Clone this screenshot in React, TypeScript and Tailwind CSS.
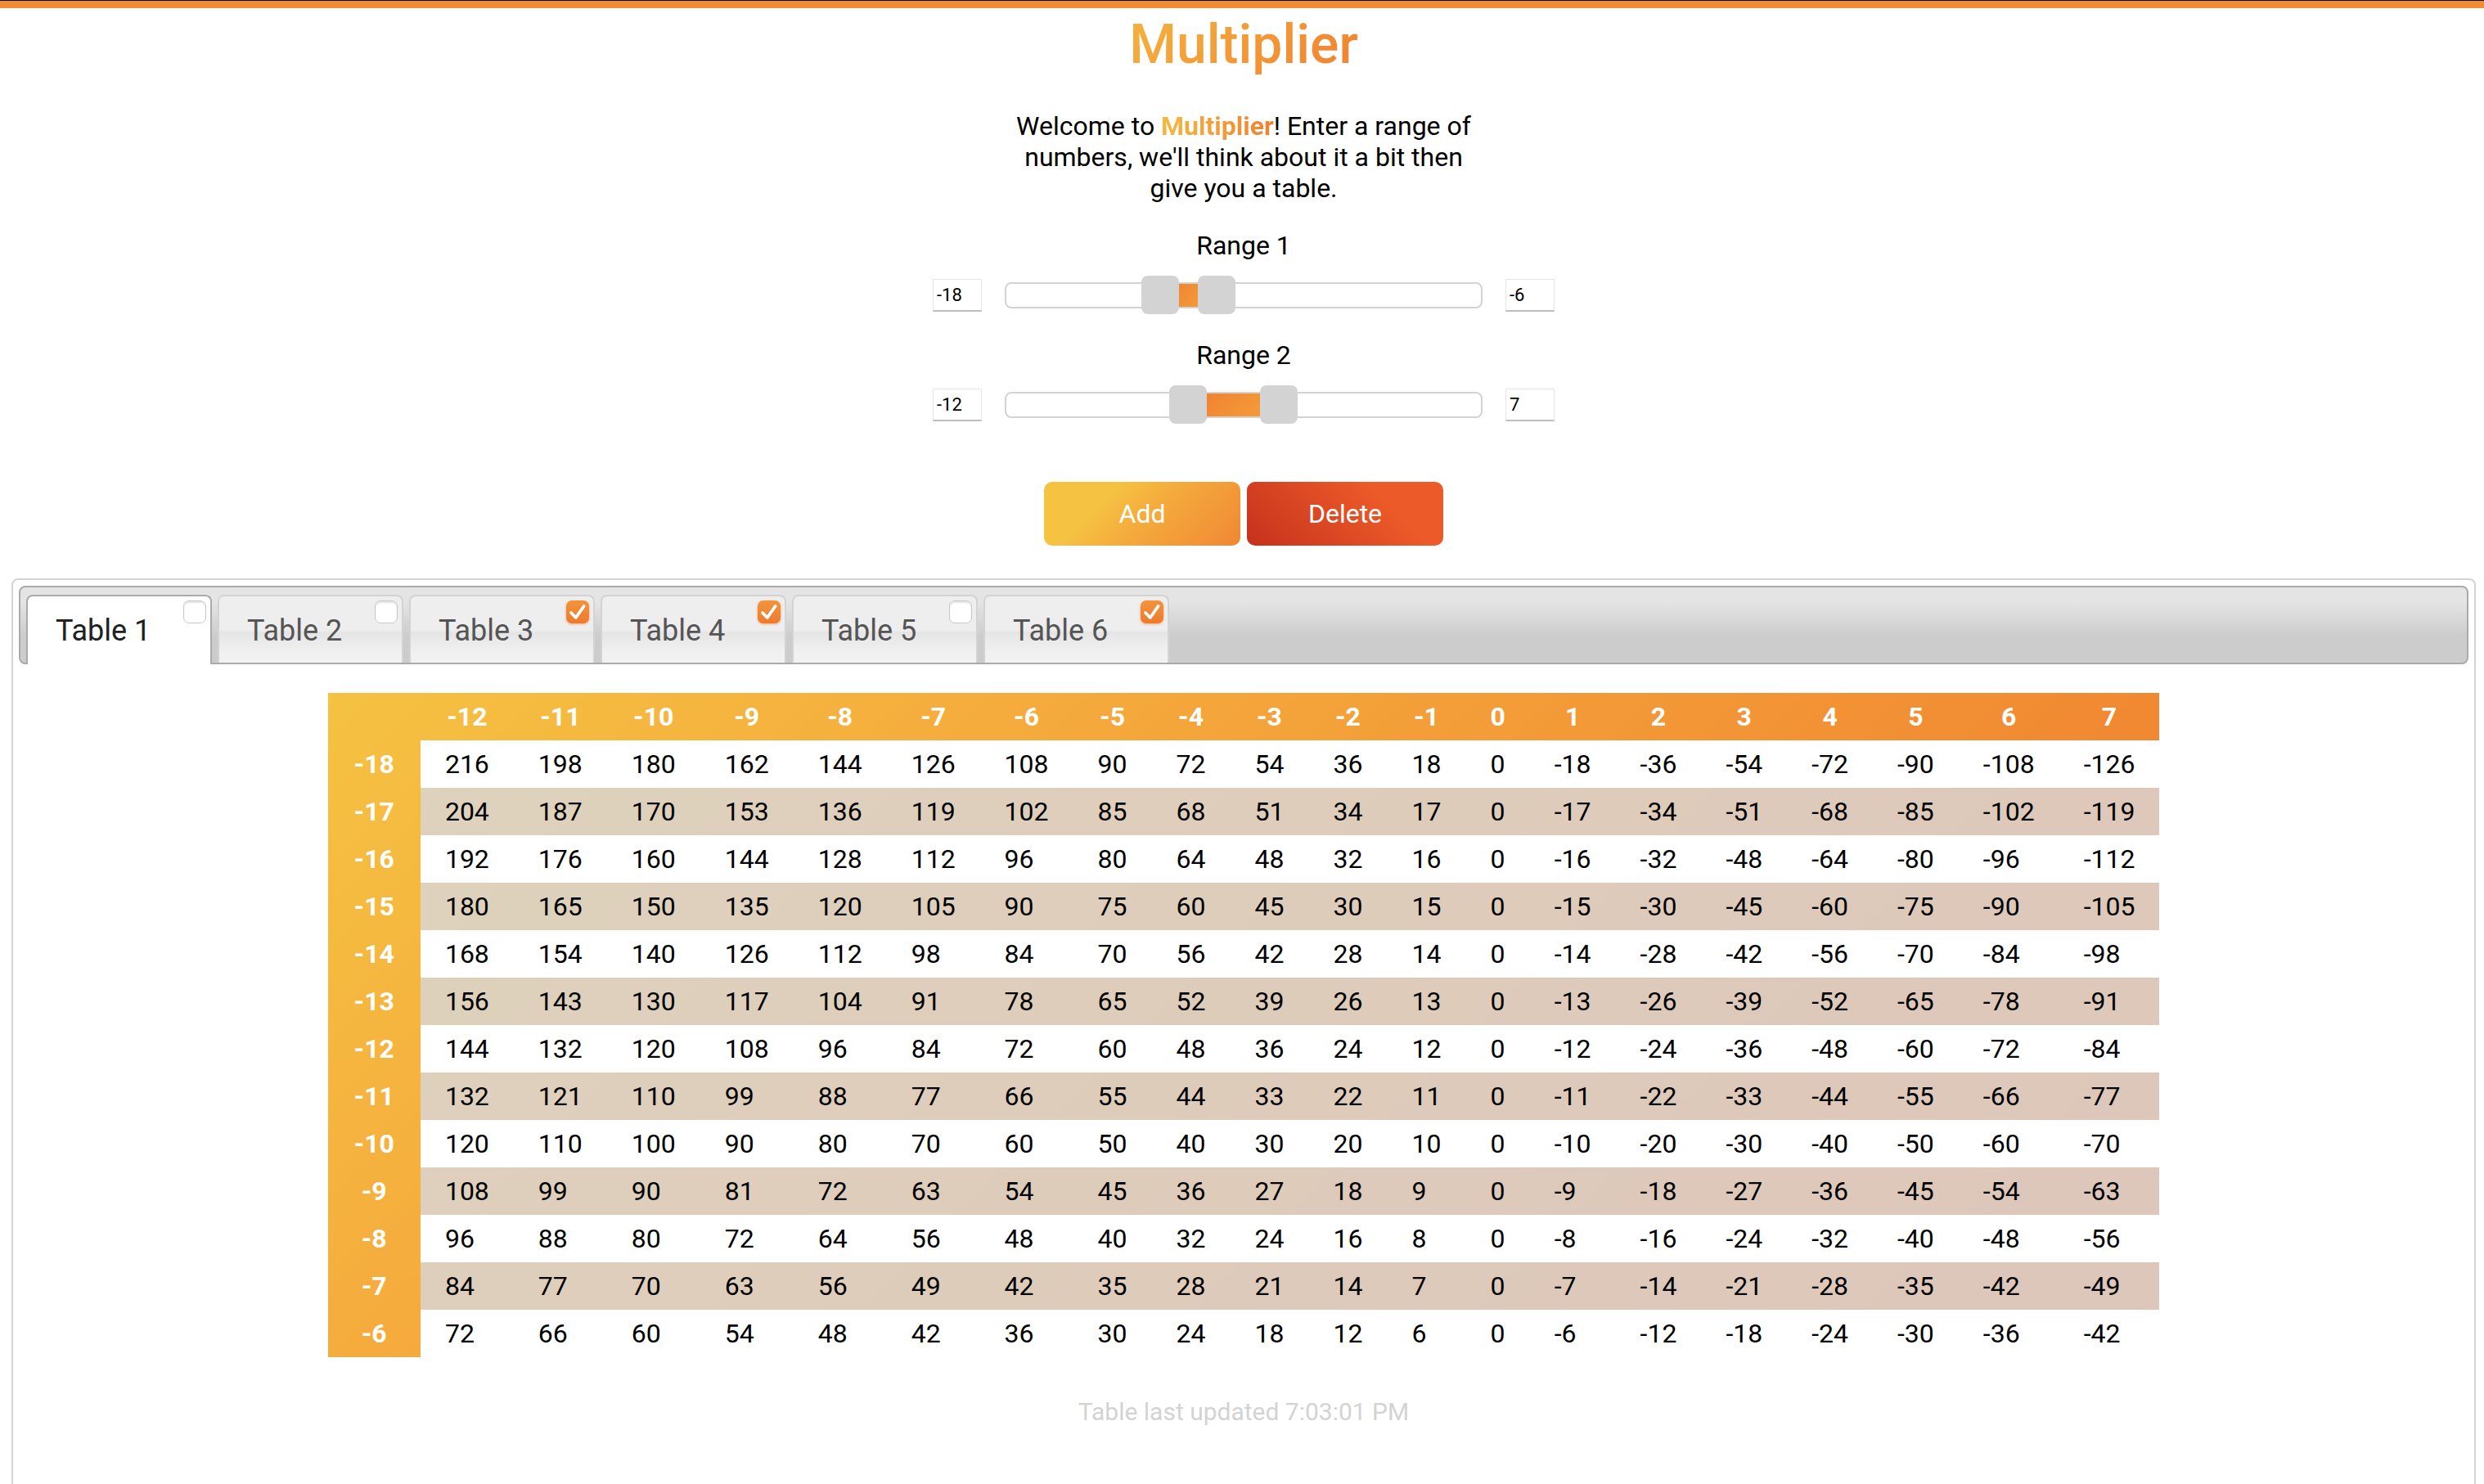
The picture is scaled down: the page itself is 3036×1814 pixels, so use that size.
import { useState } from "react";

type Range = [number, number];
type SheetTab = { name: string; checked: boolean };

const MIN = -50;
const MAX = 50;

const sequence = ([from, to]: Range) =>
  Array.from({ length: to - from + 1 }, (_, i) => from + i);

function Stepper({
  label,
  value,
  onChange,
}: {
  label: string;
  value: number;
  onChange: (value: number) => void;
}) {
  return (
    <input
      type="text"
      aria-label={label}
      value={value}
      onChange={(e) => onChange(Number(e.target.value) || 0)}
      className="h-10 w-15 border border-b-2 border-[#e6e6e6] border-b-[#bdbdbd] bg-white pl-1 text-[22px] leading-6 outline-none"
    />
  );
}

function Handle({
  label,
  value,
  onChange,
}: {
  label: string;
  value: number;
  onChange: (value: number) => void;
}) {
  return (
    <input
      type="range"
      aria-label={label}
      min={MIN}
      max={MAX}
      value={value}
      onChange={(e) => onChange(Number(e.target.value))}
      className="pointer-events-none absolute -top-[11px] -left-[21px] h-12 w-[calc(100%+46px)] appearance-none bg-transparent [&::-webkit-slider-thumb]:pointer-events-auto [&::-webkit-slider-thumb]:h-[47px] [&::-webkit-slider-thumb]:w-[46px] [&::-webkit-slider-thumb]:appearance-none [&::-webkit-slider-thumb]:rounded-lg [&::-webkit-slider-thumb]:bg-[#d3d3d3]"
    />
  );
}

function RangeRow({
  label,
  range,
  onChange,
}: {
  label: string;
  range: Range;
  onChange: (range: Range) => void;
}) {
  const [low, high] = range;
  const percent = (v: number) => ((v - MIN) / (MAX - MIN)) * 100;
  return (
    <fieldset className="flex w-190 flex-col items-center">
      <legend className="mx-auto leading-[38px]">{label}</legend>
      <div className="mt-[22px] flex h-10 w-full items-center justify-between">
        <Stepper label={label + " minimum"} value={low} onChange={(v) => onChange([v, high])} />
        <div className="relative h-8 w-146 rounded-lg border-2 border-[#d3d3d3]">
          <div
            className="absolute inset-y-0 bg-linear-135 from-[#ee7c2f] to-[#f5a13b]"
            style={{ left: percent(low) + "%", width: percent(high) - percent(low) + "%" }}
          />
          <Handle label={label + " lower handle"} value={low} onChange={(v) => onChange([v, high])} />
          <Handle label={label + " upper handle"} value={high} onChange={(v) => onChange([low, v])} />
        </div>
        <Stepper label={label + " maximum"} value={high} onChange={(v) => onChange([low, v])} />
      </div>
    </fieldset>
  );
}

function TickBox({
  label,
  checked,
  onChange,
}: {
  label: string;
  checked: boolean;
  onChange: () => void;
}) {
  return (
    <span className="absolute top-[5px] right-[5px] size-7">
      <input
        type="checkbox"
        aria-label={label}
        checked={checked}
        onChange={onChange}
        className="block size-7 appearance-none rounded-[7px] border border-[#c8c8c8] bg-white shadow-[inset_0_2px_2px_#e4e4e4] checked:border-0 checked:bg-linear-to-b checked:from-[#f2943d] checked:to-[#ee7a2c] checked:shadow-[0_1px_3px_#f0a878]"
      />
      {checked && (
        <svg viewBox="0 0 28 28" className="pointer-events-none absolute inset-0 size-7" aria-hidden="true">
          <path
            d="M6 15 L11.8 21 L21.6 7"
            fill="none"
            stroke="#fff"
            strokeWidth="3.8"
            strokeLinecap="round"
            strokeLinejoin="round"
          />
        </svg>
      )}
    </span>
  );
}

function MultiplicationTable({ rows, columns }: { rows: number[]; columns: number[] }) {
  return (
    <table className="mx-auto mt-[35px] bg-linear-[135deg,#f5c242,#f5ad3d_26%,#f18932_73%,#ef8032] text-left">
      <thead>
        <tr>
          <td />
          {columns.map((c) => (
            <th key={c} scope="col" className="px-[30px] py-[10px] text-center font-bold text-white">
              {c}
            </th>
          ))}
        </tr>
      </thead>
      <tbody>
        {rows.map((r) => (
          <tr key={r} className="group">
            <th scope="row" className="px-8 py-[10px] text-center font-bold text-white">
              {r}
            </th>
            {columns.map((c) => (
              <td
                key={c}
                className="bg-white px-[30px] py-[10px] group-even:bg-[rgb(216_216_220/0.8)]"
              >
                {r * c === 0 ? 0 : r * c}
              </td>
            ))}
          </tr>
        ))}
      </tbody>
    </table>
  );
}

export default function App() {
  const [rowRange, setRowRange] = useState<Range>([-18, -6]);
  const [columnRange, setColumnRange] = useState<Range>([-12, 7]);
  const [active, setActive] = useState(0);
  const [tabs, setTabs] = useState<SheetTab[]>([
    { name: "Table 1", checked: false },
    { name: "Table 2", checked: false },
    { name: "Table 3", checked: true },
    { name: "Table 4", checked: true },
    { name: "Table 5", checked: false },
    { name: "Table 6", checked: true },
  ]);

  const toggle = (index: number) =>
    setTabs(tabs.map((t, i) => (i === index ? { ...t, checked: !t.checked } : t)));

  return (
    <div className="flex h-screen flex-col overflow-hidden bg-white font-[Roboto,sans-serif] text-[32px] leading-[38px] text-black">
      <div className="h-[10px] shrink-0 border-t border-black bg-[#f18c34]" />
      <main className="flex grow flex-col pr-[10px] pl-[14px]">
        <header className="flex flex-col items-center text-center">
          <h1 className="mt-[7px] bg-linear-135 from-[#f5b23e] to-[#ef8032] bg-clip-text text-[66px] leading-[76px] font-medium text-transparent">
            Multiplier
          </h1>
          <p className="mt-[42px] w-150">
            Welcome to{" "}
            <strong className="bg-linear-to-r from-[#f5b83f] to-[#ef8032] bg-clip-text font-bold text-transparent">
              Multiplier
            </strong>
            ! Enter a range of numbers, we'll think about it a bit then give you a table.
          </p>
        </header>

        <form className="mt-8 flex flex-col items-center" onSubmit={(e) => e.preventDefault()}>
          <RangeRow label="Range 1" range={rowRange} onChange={setRowRange} />
          <div className="h-[34px]" />
          <RangeRow label="Range 2" range={columnRange} onChange={setColumnRange} />
          <div className="mt-[74px] flex gap-2 text-white">
            <button
              type="button"
              className="h-[78px] w-60 rounded-[10px] bg-linear-[135deg,#f5c242_30%,#f5ad3d_50%,#ef8032_110%]"
            >
              Add
            </button>
            <button
              type="button"
              className="h-[78px] w-60 rounded-[10px] bg-linear-[45deg,#c5311c,#ec5a29_70%]"
            >
              Delete
            </button>
          </div>
        </form>

        <section className="mt-10 grow rounded-t-lg border-2 border-b-0 border-[#d3d3d3] p-[7px]">
          <div
            role="tablist"
            className="flex h-24 items-end gap-[7px] rounded-lg border-2 border-[#aaa] bg-linear-[180deg,#e4e4e4_20%,#ccc_65%] pl-[7px] text-[36px]"
          >
            {tabs.map((tab, i) => (
              <div
                key={tab.name}
                className={
                  i === active
                    ? "relative -mb-0.5 h-[85px] w-[227px] rounded-t-lg border-2 border-b-0 border-[#aaa] bg-white pb-0.5 text-[#212121]"
                    : "relative h-[83px] w-[227px] rounded-t-lg border-2 border-b-0 border-[#d3d3d3] bg-linear-[180deg,#eee_50%,#e5e5e5_55%,#f1f1f1_85%] text-[#555]"
                }
              >
                <button
                  type="button"
                  role="tab"
                  aria-selected={i === active}
                  onClick={() => setActive(i)}
                  className="block h-full w-full pt-0.5 pl-[34px] text-left"
                >
                  {tab.name}
                </button>
                <TickBox label={"Select " + tab.name} checked={tab.checked} onChange={() => toggle(i)} />
              </div>
            ))}
          </div>
          <MultiplicationTable rows={sequence(rowRange)} columns={sequence(columnRange)} />
          <p className="mt-12 text-center text-[30px] text-[#d3d3d3]">Table last updated 7:03:01 PM</p>
        </section>
      </main>
    </div>
  );
}
